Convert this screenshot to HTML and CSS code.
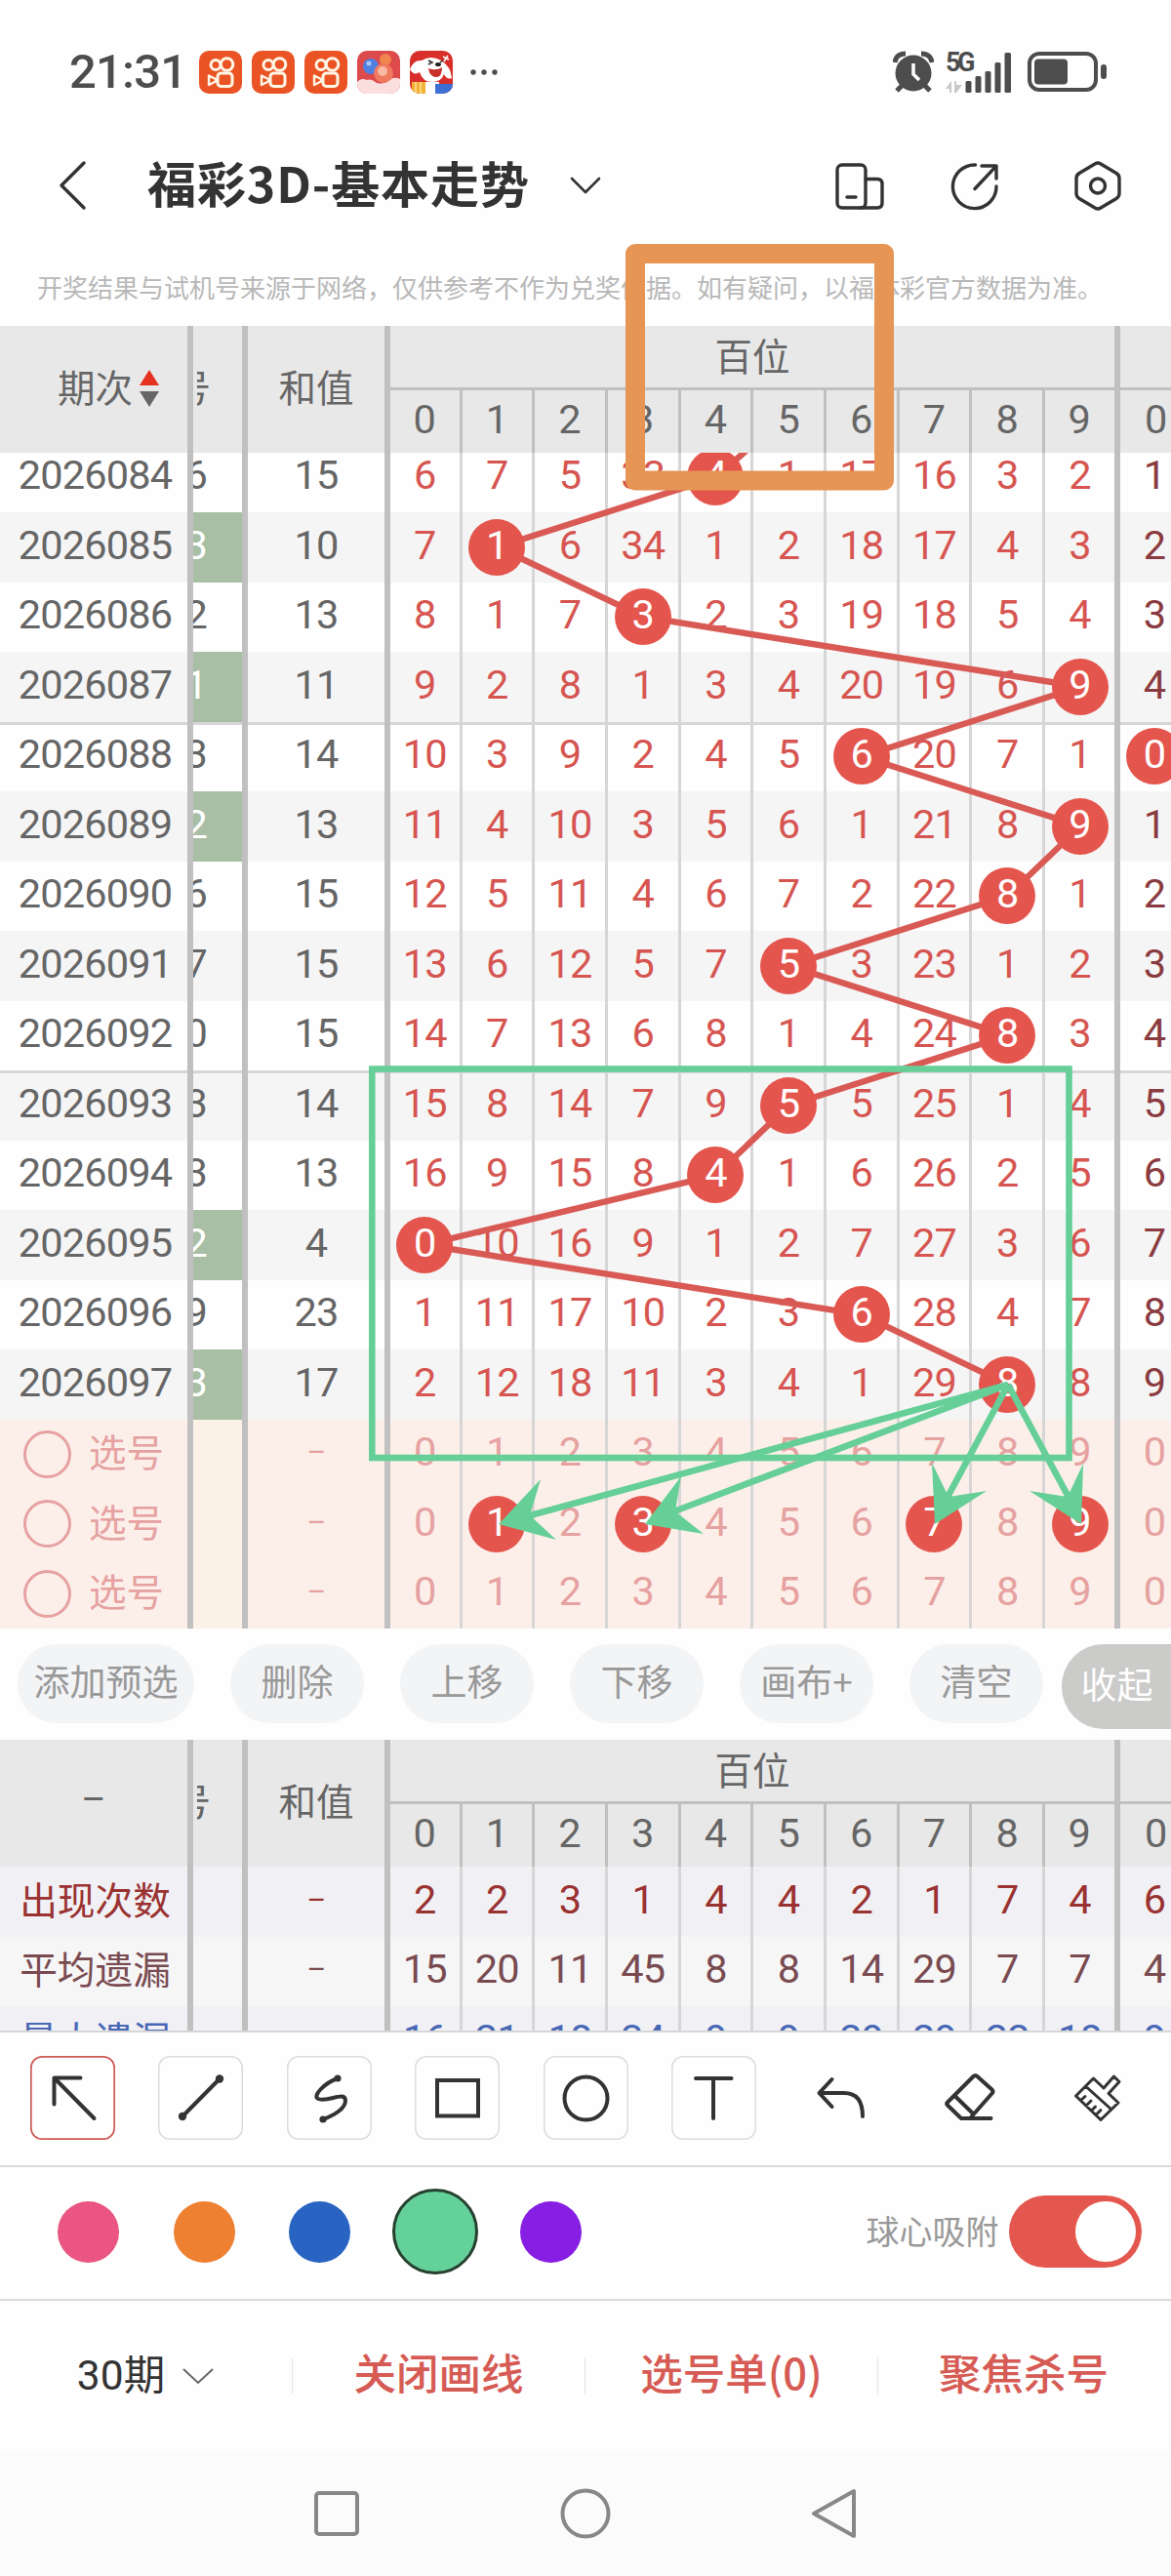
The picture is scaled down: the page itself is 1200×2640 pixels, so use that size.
FILE: index.html
```
<!DOCTYPE html>
<html lang="zh-CN">
<head>
    <meta charset="UTF-8">
    <meta name="viewport" content="width=device-width, initial-scale=1.0">
    <title>福彩3D-基本走势</title>
    <link rel="stylesheet" href="styles.css">
</head>
<body>
<div class="phone">
    <div class="status-bar">
        <span class="clock">21:31</span>
        <div class="app-icons">
            <svg class="app" viewBox="0 0 44 44"><use href="#kuai"/></svg>
            <svg class="app" viewBox="0 0 44 44"><use href="#kuai"/></svg>
            <svg class="app" viewBox="0 0 44 44"><use href="#kuai"/></svg>
            <svg class="app" viewBox="0 0 44 44">
                <rect width="44" height="44" fill="#dd4a4c"/>
                <path d="M0 32 Q4 27 10 30 Q15 28 20 33 Q28 35 33 30 Q38 26 44 29 V44 H0 Z" fill="#fbdfdf"/>
                <circle cx="29" cy="9" r="6" fill="#f0854f"/>
                <circle cx="14" cy="16" r="8" fill="#4f7fe0"/>
                <circle cx="12" cy="13" r="2.5" fill="#a9c4f7"/>
                <circle cx="27" cy="23" r="10" fill="#f07a5f"/>
                <circle cx="26" cy="21" r="5" fill="#f9b9a2"/>
            </svg>
            <svg class="app" viewBox="0 0 44 44">
                <rect width="44" height="44" fill="#d92f2b"/>
                <path d="M12 10 Q22 4 32 10 Q42 16 43 28 Q38 30 35 24 Q32 32 23 32 Q13 32 10 22 Q4 26 0 19 Q4 9 12 10 Z" fill="#fff"/>
                <path d="M19 18 Q27 21 33 17 Q33 28 26 27 Q20 26 19 18 Z" fill="#c9302c"/>
                <ellipse cx="29" cy="14" rx="3" ry="2" fill="#222"/>
                <path d="M19 10 l4 2 l-4 2 M34 10 l-3 2" fill="none" stroke="#222" stroke-width="1.4"/>
                <path d="M14 32 H30 V44 H14 Z" fill="#fff"/>
                <rect x="2" y="32" width="14" height="12" fill="#f2b233"/>
                <path d="M6 32 v12 M11 32 v12" stroke="#fbe0a0" stroke-width="1.5"/>
                <rect x="26" y="34" width="18" height="10" fill="#3d6fd6"/>
                <path d="M34 6 l6 3 M39 5 l-4 6" stroke="#fff" stroke-width="1.5"/>
            </svg>
        </div>
        <svg class="dots" viewBox="0 0 28 8"><circle cx="3" cy="4" r="2.7"/><circle cx="14" cy="4" r="2.7"/><circle cx="25" cy="4" r="2.7"/></svg>
        <svg class="alarm" viewBox="0 0 42 44">
            <circle cx="21" cy="23" r="18.5" fill="#4d4d4d"/>
            <path d="M2 12 Q3 3 13 3 M29 3 Q39 3 40 12" fill="none" stroke="#4d4d4d" stroke-width="5"/>
            <path d="M9 36 L4 41 M33 36 L38 41" stroke="#4d4d4d" stroke-width="5"/>
            <path d="M21 13 V24 L27 30" fill="none" stroke="#fff" stroke-width="3.5"/>
        </svg>
        <div class="signal">
            <span class="net">5G</span>
            <svg viewBox="0 0 68 42">
                <path d="M0 38 L6 30 V42 H4 V38 Z M9 30 H11 V34 L17 34 L11 42 H9 Z" fill="#c8c8c8"/>
                <g fill="#4d4d4d">
                    <rect x="20.5" y="30" width="6" height="12" rx="1.5"/>
                    <rect x="30.5" y="25" width="6" height="17" rx="1.5"/>
                    <rect x="40.5" y="20" width="6" height="22" rx="1.5"/>
                    <rect x="50.5" y="11" width="6" height="31" rx="1.5"/>
                    <rect x="60.5" y="1" width="6.5" height="41" rx="1.5"/>
                </g>
            </svg>
        </div>
        <svg class="battery" viewBox="0 0 82 42">
            <rect x="2" y="2" width="68" height="37" rx="10" fill="none" stroke="#4d4d4d" stroke-width="4"/>
            <rect x="7" y="7.5" width="34" height="26" rx="4" fill="#4d4d4d"/>
            <rect x="75" y="13" width="6" height="15" rx="3" fill="#4d4d4d"/>
        </svg>
    </div>

    <div class="title-bar">
        <svg class="back" viewBox="0 0 30 52"><path d="M27 3 L4 26 L27 49"/></svg>
        <h1>福彩3D-基本走势</h1>
        <svg class="chevron" viewBox="0 0 32 18"><path d="M2 2 L16 16 L30 2"/></svg>
        <svg class="action phone-icon" viewBox="0 0 52 52">
            <rect x="4" y="5" width="29" height="44" rx="5"/>
            <path d="M33 19.5 H45 Q50 19.5 50 24.5 V44 Q50 49 45 49 H28 M14 38 H23"/>
        </svg>
        <svg class="action share-icon" viewBox="0 0 52 52">
            <path d="M26.5 5 A22.3 22.3 0 1 0 48 27 M33 6 H48 V19 M48 6 L26 29.5"/>
        </svg>
        <svg class="action set-icon" viewBox="0 0 52 52">
            <path d="M23 4 Q26 2 29 4 L45 13.5 Q48 15.5 48 18.5 V34.5 Q48 37.5 45 39.5 L29 49 Q26 51 23 49 L7 39.5 Q4 37.5 4 34.5 V18.5 Q4 15.5 7 13.5 Z"/>
            <circle cx="26" cy="26.5" r="7.5"/>
        </svg>
    </div>

    <p class="notice">开奖结果与试机号来源于网络，仅供参考不作为兑奖依据。如有疑问，以福体彩官方数据为准。</p>

    <div class="chart-head" id="mainHead"></div>
    <div class="chart-body">
        <div class="rows" id="mainRows"></div>
        <svg class="trend" viewBox="0 0 1200 1205">
            <polyline id="trendLine"/>
        </svg>
    </div>

    <div class="edit-bar">
        <button class="pill wide">添加预选</button>
        <button class="pill">删除</button>
        <button class="pill">上移</button>
        <button class="pill">下移</button>
        <button class="pill">画布+</button>
        <button class="pill">清空</button>
        <button class="fold">收起</button>
    </div>

    <div class="chart-head" id="statHead"></div>
    <div class="stats" id="statRows"></div>

    <div class="tools">
        <svg class="tool active" viewBox="0 0 87 86"><path d="M51.5 22.5 H24.5 V49.5 M24.5 22.5 L65.5 64"/></svg>
        <svg class="tool" viewBox="0 0 87 86"><path d="M63 23.5 L25 62"/><circle class="dot" cx="63" cy="23.5" r="4.2"/><circle class="dot" cx="25" cy="62" r="4.2"/></svg>
        <svg class="tool" viewBox="0 0 87 86"><path d="M52 23 C38 28 26 41 32 44 C42 48 60 35 60 46 C60 54 48 61 37 65"/><circle class="dot" cx="52" cy="23" r="3.6"/><circle class="dot" cx="37" cy="65" r="3.6"/></svg>
        <svg class="tool" viewBox="0 0 87 86"><path class="sharp" d="M23 25 H65 V61.5 H23 Z"/></svg>
        <svg class="tool" viewBox="0 0 87 86"><circle cx="43.5" cy="43.5" r="22"/></svg>
        <svg class="tool" viewBox="0 0 87 86"><path d="M25 23 H61.5 M43 23 V64"/></svg>
        <svg class="tool plain" viewBox="0 0 87 86"><path d="M33.5 24 L20.5 38 L33.5 52 M20.5 38 H46 Q65 38 65 62"/></svg>
        <svg class="tool plain" viewBox="0 0 87 86"><path d="M46.5 21 Q48.5 19 50.5 21 L65.5 34.5 Q67.5 36.5 65.5 38.5 L43 64 H34 L20 50.5 Q18.5 49 20 47.5 Z M27.5 41 L46 59 M34 64 H64.5"/></svg>
        <svg class="tool plain thin" viewBox="0 0 87 86"><path d="M59.5 21 L65 26.5 L54 38.5 L64 48 L46 65.5 L20.5 41 L38.5 23 L49 33 Z M31 31.5 L56.5 54.5 M25.5 45.5 L30 41.5 M31 51 L36 46 M36.5 56 L40.5 52 M41 60.5 L46 55.5"/></svg>
    </div>

    <div class="colors">
        <span class="swatch pink"></span>
        <span class="swatch orange"></span>
        <span class="swatch blue"></span>
        <span class="swatch green selected"></span>
        <span class="swatch purple"></span>
        <span class="snap-label">球心吸附</span>
        <span class="switch"><i></i></span>
    </div>

    <div class="bottom-bar">
        <div class="item dark">30期<svg class="chevron small" viewBox="0 0 34 18"><path d="M2 2 L17 16 L32 2"/></svg></div>
        <div class="item">关闭画线</div>
        <div class="item">选号单(0)</div>
        <div class="item">聚焦杀号</div>
    </div>

    <div class="nav-bar">
        <svg viewBox="0 0 56 56"><rect x="7" y="7" width="42" height="42" rx="3"/></svg>
        <svg viewBox="0 0 56 56"><circle cx="28" cy="28" r="23.5"/></svg>
        <svg viewBox="0 0 56 56"><path d="M48 5 V51 L7 28 Z"/></svg>
    </div>

    <!-- user drawings on top of the chart -->
    <svg class="canvas" viewBox="0 0 1200 2640">
        <rect x="651" y="260" width="255" height="232.5" fill="none" stroke="#e69555" stroke-width="20" stroke-linejoin="round"/>
        <rect x="381.3" y="1095.5" width="714.2" height="398.5" fill="none" stroke="#66cf98" stroke-width="6.6"/>
        <g fill="none" stroke="#66cf98" stroke-width="6.6">
            <path d="M1033 1419 L540 1554"/>
            <path d="M1033 1419 L688 1550"/>
            <path d="M1033 1419 L969 1538"/>
            <path d="M1033 1419 L1097 1538"/>
        </g>
        <g fill="#66cf98">
            <path d="M511 1562 L554 1516 L543 1553 L570 1578 Z"/>
            <path d="M661 1562 L698 1513 L692 1549 L721 1572 Z"/>
            <path d="M958 1562 L955 1499 L972 1534 L1011 1528 Z"/>
            <path d="M1108 1562 L1110 1500 L1094 1534 L1055 1528 Z"/>
        </g>
    </svg>
</div>

<svg width="0" height="0" class="defs">
    <symbol id="kuai" viewBox="0 0 44 44">
        <rect width="44" height="44" fill="#ea5424"/>
        <g fill="none" stroke="#fff6e6" stroke-width="3">
            <circle cx="17" cy="14.5" r="5"/>
            <circle cx="28.5" cy="14" r="6.3"/>
            <rect x="19" y="23" width="15" height="13.5" rx="3.5"/>
            <path d="M10 25.5 L17 29 V31.5 L10 35 Z" stroke-width="2.4" stroke-linejoin="round"/>
        </g>
    </symbol>
</svg>
<script src="script.js"></script>
</body>
</html>
```
FILE: styles.css
```
* {
    box-sizing: border-box;
}
body {
    margin: 0;
    background-color: #fefefe;
    font-family: Roboto, "Noto Sans CJK SC", sans-serif;
    color: #666;
}
.phone {
    position: relative;
    width: 1200px;
    height: 2640px;
    overflow: hidden;
}
.defs {
    display: block;
}

/* Status bar */
.status-bar {
    display: flex;
    align-items: center;
    height: 147px;
    padding-left: 71px;
}
.clock {
    width: 133px;
    font-size: 49px;
    font-weight: 500;
    letter-spacing: -0.8px;
    color: #4d4d4d;
}
.app-icons {
    display: flex;
    gap: 10px;
}
.app {
    width: 44px;
    height: 44px;
    border-radius: 10px;
}
.dots {
    width: 28px;
    height: 8px;
    margin-left: 18px;
    fill: #4d4d4d;
}
.alarm {
    width: 42px;
    height: 44px;
    margin-left: 405px;
}
.signal {
    position: relative;
    width: 68px;
    height: 42px;
    margin-left: 12px;
}
.signal svg {
    display: block;
    width: 68px;
    height: 42px;
}
.net {
    position: absolute;
    left: 0;
    top: -2px;
    font-size: 27px;
    line-height: 26px;
    font-weight: 700;
    letter-spacing: -3.5px;
    color: #4d4d4d;
}
.battery {
    width: 82px;
    height: 42px;
    margin-left: 16px;
}

/* Title bar */
.title-bar {
    display: flex;
    align-items: center;
    height: 86px;
    padding-left: 59px;
}
.title-bar svg {
    flex: none;
    fill: none;
    stroke: #333;
    stroke-width: 3.4;
    stroke-linecap: round;
    stroke-linejoin: round;
}
.back {
    width: 30px;
    height: 52px;
}
.title-bar h1 {
    width: 394px;
    margin: -9px 0 0 62px;
    font-family: "Noto Sans CJK SC", sans-serif;
    font-size: 50px;
    font-weight: 700;
    letter-spacing: 0.9px;
    white-space: nowrap;
    color: #333;
}
.title-bar .chevron {
    width: 32px;
    height: 18px;
    margin-left: 39px;
    stroke-width: 2.6;
}
.action {
    width: 52px;
    height: 52px;
}
.phone-icon {
    margin-left: 238px;
}
.share-icon {
    margin-left: 67px;
}
.set-icon {
    margin-left: 74px;
}

.notice {
    height: 101px;
    margin: 0;
    padding: 43px 0 0 38px;
    font-size: 26px;
    line-height: 40px;
    white-space: nowrap;
    color: #b8b8b8;
}

/* Chart */
.chart-head {
    display: grid;
    grid-template-columns: 198px 56px 146px 748px 73px;
    height: 130px;
    font-size: 38.5px;
    background-color: #e8e8e8;
}
.head-cell {
    display: flex;
    align-items: center;
    justify-content: center;
    padding-bottom: 9px;
    border-right: 6px solid #c0c0c0;
    overflow: hidden;
}
.head-cell.period {
    justify-content: flex-start;
    padding-left: 59px;
}
.head-cell.cut {
    justify-content: flex-end;
    margin-left: 4px;
    padding-right: 32px;
}
.sort {
    display: flex;
    flex-direction: column;
    gap: 6px;
    margin: 7px 0 0 7px;
}
.sort i {
    border-left: 10px solid transparent;
    border-right: 10px solid transparent;
}
.sort .up {
    border-bottom: 16px solid #e5321f;
}
.sort .down {
    border-top: 16px solid #666;
}
.group {
    display: grid;
    grid-template-rows: 66px 64px;
    border-right: 6.5px solid #c0c0c0;
}
.group-name {
    display: flex;
    align-items: center;
    justify-content: center;
    padding-bottom: 6px;
    border-bottom: 3px solid #c0c0c0;
}
.group-nums {
    display: grid;
    grid-template-columns: 73.5px repeat(8, 74.7px) 70.5px;
}
.group-nums span {
    display: flex;
    align-items: center;
    justify-content: center;
    padding-bottom: 6px;
    font-size: 41.5px;
    border-right: 3px solid #c0c0c0;
}
.group-nums span:last-child {
    border-right: none;
}

.chart-body {
    position: relative;
    height: 1205px;
    overflow: hidden;
}
.rows {
    margin-top: -10.5px;
}
.row {
    display: grid;
    grid-template-columns: 198px 56px 146px 73.5px repeat(8, 74.7px) 77px 73px;
    height: 71.5px;
    font-size: 41.5px;
    letter-spacing: -0.8px;
    background-color: #fefefe;
}
.row.alt {
    background-color: #f5f5f5;
}
.cell {
    display: flex;
    align-items: center;
    justify-content: center;
    min-width: 0;
    padding-bottom: 5px;
    border-right: 3px solid #d6d6d6;
    white-space: nowrap;
}
.cell.wide {
    border-right: 6px solid #c0c0c0;
}
.cell:first-child {
    padding-left: 3px;
}
.split .cell {
    box-shadow: inset 0 3px #d6d6d6;
}
.cell.cut {
    justify-content: flex-end;
    padding-right: 36px;
    overflow: hidden;
}
.cell.green {
    color: #fff;
    background-color: #a8bfa5;
}
.cell.hundred {
    color: #d65551;
}
.cell.ten {
    color: #8a3b40;
}
.cell.dash {
    font-size: 30px;
}
.cell.hit {
    padding-bottom: 0;
}
.ball {
    position: relative;
    z-index: 2;
    flex: none;
    width: 58px;
    height: 58px;
    margin: 0 -10px;
    padding-bottom: 5px;
    line-height: 53px;
    text-align: center;
    border-radius: 50%;
    color: #fff;
    background-color: #e4554d;
}
.row.pick {
    background-color: #fcefe9;
}
.row.pick .cell {
    color: #e6a1a1;
}
.row.pick .cut {
    background-color: #fcf1e6;
}
.cell.pick-name {
    padding: 0 0 8px;
    font-size: 38.5px;
    letter-spacing: 0;
}
.pick-name i {
    width: 49px;
    height: 49px;
    margin: 8px 18px 0 0;
    border: 3px solid #e6a1a1;
    border-radius: 50%;
}
.row.pick .ball {
    color: #fff;
}
.trend {
    position: absolute;
    left: 0;
    top: 0;
    width: 1200px;
    height: 1205px;
    z-index: 1;
}
.trend polyline {
    fill: none;
    stroke: #d95a55;
    stroke-width: 6.4;
}

/* Edit buttons */
.edit-bar {
    display: flex;
    gap: 37px;
    height: 114px;
    padding: 16px 0 0 18px;
}
.edit-bar button {
    flex: none;
    width: 137px;
    height: 81px;
    padding: 0 0 7px;
    border: none;
    border-radius: 41px;
    font-family: "Noto Sans CJK SC", sans-serif;
    font-size: 37px;
    color: #999;
    background-color: #f3f4f6;
}
.edit-bar .wide {
    width: 181px;
}
.edit-bar .fold {
    width: 113px;
    height: 87px;
    margin-left: -18px;
    border-radius: 43px 0 0 43px;
    color: #fff;
    background-color: #cbcbca;
}

/* Statistics */
.stats {
    height: 168px;
    overflow: hidden;
}
.stats .row {
    background-color: #f1f1f5;
}
.stats .row.alt {
    background-color: #f6f6f7;
}
.stats .cell:first-child {
    padding-bottom: 8px;
    font-size: 38.7px;
    letter-spacing: 0;
}
.stats .times .cell {
    color: #9a3231;
}
.stats .avg .cell {
    color: #794b50;
}
.stats .max .cell {
    color: #4867b5;
}

/* Drawing tools */
.tools {
    display: flex;
    gap: 44.4px;
    height: 138px;
    padding: 24px 0 0 31px;
    border-top: 2px solid #d6d6d6;
}
.tool {
    flex: none;
    width: 87px;
    height: 86px;
    border-radius: 12px;
    box-shadow: inset 0 0 0 1.5px #dcdce0;
    fill: none;
    stroke: #333;
    stroke-width: 4;
    stroke-linecap: round;
    stroke-linejoin: round;
}
.tool.active {
    box-shadow: inset 0 0 0 1.7px #cf5a56;
}
.tool.plain {
    box-shadow: none;
}
.tool.thin {
    stroke-width: 3;
}
.tool .dot {
    fill: #333;
    stroke: none;
}
.tool .sharp {
    stroke-linejoin: miter;
}

.colors {
    display: flex;
    align-items: center;
    height: 137px;
    padding: 0 0 3px 59px;
    border-top: 2px solid #dadada;
}
.swatch {
    width: 63px;
    height: 63px;
    margin-right: 55.5px;
    border-radius: 50%;
}
.pink { background-color: #ea5583; }
.orange { background-color: #ee8032; }
.blue { background-color: #2a64c3; }
.green { background-color: #64d09a; }
.purple { background-color: #871fe3; }
.swatch.selected {
    width: 88px;
    height: 88px;
    margin: 0 43px 0 -12.5px;
    border: 3px solid #26402f;
}
.snap-label {
    margin: -4px 10px 0 236px;
    font-size: 34px;
    color: #999;
}
.switch {
    display: flex;
    justify-content: flex-end;
    align-items: center;
    width: 136px;
    height: 74px;
    padding-right: 6px;
    border-radius: 37px;
    background-color: #e4574f;
}
.switch i {
    width: 62px;
    height: 62px;
    border-radius: 50%;
    background-color: #fff;
}

.bottom-bar {
    display: flex;
    align-items: center;
    height: 156px;
    border-top: 2px solid #dadada;
}
.item {
    display: flex;
    align-items: center;
    justify-content: center;
    width: 300px;
    height: 38px;
    padding-bottom: 9px;
    font-family: "Noto Sans CJK SC", sans-serif;
    font-size: 43.5px;
    font-weight: 500;
    color: #d65b54;
    border-right: 1px solid #e2e2e2;
}
.item:last-child {
    padding-right: 2px;
    border-right: none;
}
.item.dark {
    font-family: Roboto, "Noto Sans CJK SC", sans-serif;
    font-size: 42.5px;
    font-weight: 400;
    color: #333;
}
.chevron.small {
    width: 34px;
    height: 18px;
    margin: 9px 0 0 17px;
    fill: none;
    stroke: #666;
    stroke-width: 2;
}

.nav-bar {
    display: flex;
    justify-content: center;
    gap: 199px;
    height: 128px;
    padding-top: 36px;
    background-color: #fbfbfb;
}
.nav-bar svg {
    width: 56px;
    height: 56px;
    fill: none;
    stroke: #888;
    stroke-width: 4;
    stroke-linejoin: round;
}

.canvas {
    position: absolute;
    left: 0;
    top: 0;
    width: 1200px;
    height: 2640px;
    z-index: 3;
}
```
FILE: script.js
```
// [period, last digit of the test number, highlighted, sum, hundreds 0-9, tens 0, hit column]
const draws = [
    ["2026084", 6, 0, 15, [6, 7, 5, 33, 4, 1, 17, 16, 3, 2], 1, 4],
    ["2026085", 3, 1, 10, [7, 1, 6, 34, 1, 2, 18, 17, 4, 3], 2, 1],
    ["2026086", 2, 0, 13, [8, 1, 7, 3, 2, 3, 19, 18, 5, 4], 3, 3],
    ["2026087", 1, 1, 11, [9, 2, 8, 1, 3, 4, 20, 19, 6, 9], 4, 9],
    ["2026088", 3, 0, 14, [10, 3, 9, 2, 4, 5, 6, 20, 7, 1], 0, 6],
    ["2026089", 2, 1, 13, [11, 4, 10, 3, 5, 6, 1, 21, 8, 9], 1, 9],
    ["2026090", 6, 0, 15, [12, 5, 11, 4, 6, 7, 2, 22, 8, 1], 2, 8],
    ["2026091", 7, 0, 15, [13, 6, 12, 5, 7, 5, 3, 23, 1, 2], 3, 5],
    ["2026092", 0, 0, 15, [14, 7, 13, 6, 8, 1, 4, 24, 8, 3], 4, 8],
    ["2026093", 3, 0, 14, [15, 8, 14, 7, 9, 5, 5, 25, 1, 4], 5, 5],
    ["2026094", 3, 0, 13, [16, 9, 15, 8, 4, 1, 6, 26, 2, 5], 6, 4],
    ["2026095", 2, 1, 4, [0, 10, 16, 9, 1, 2, 7, 27, 3, 6], 7, 0],
    ["2026096", 9, 0, 23, [1, 11, 17, 10, 2, 3, 6, 28, 4, 7], 8, 6],
    ["2026097", 3, 1, 17, [2, 12, 18, 11, 3, 4, 1, 29, 8, 8], 9, 8]
];

const picks = [[], [1, 3, 7, 9], []];

const stats = [
    ["times", "出现次数", [2, 2, 3, 1, 4, 4, 2, 1, 7, 4], 6],
    ["avg alt", "平均遗漏", [15, 20, 11, 45, 8, 8, 14, 29, 7, 7], 4],
    ["max", "最大遗漏", [16, 21, 18, 34, 9, 9, 29, 29, 22, 18], 9]
];

const digits = [0, 1, 2, 3, 4, 5, 6, 7, 8, 9];

function headHtml(first) {
    return `
        ${first}
        <div class="head-cell cut">号</div>
        <div class="head-cell">和值</div>
        <div class="group">
            <div class="group-name">百位</div>
            <div class="group-nums">${digits.map(d => `<span>${d}</span>`).join('')}</div>
        </div>
        <div class="group">
            <div class="group-name"></div>
            <div class="group-nums"><span>0</span></div>
        </div>`;
}

function numCells(nums, hits) {
    return nums.map((n, i) => {
        const wide = i === 9 ? ' wide' : '';
        if (hits.includes(i)) {
            return `<div class="cell hundred hit${wide}"><span class="ball">${n}</span></div>`;
        }
        return `<div class="cell hundred${wide}">${n}</div>`;
    }).join('');
}

document.getElementById('mainHead').innerHTML =
    headHtml('<div class="head-cell period">期次<span class="sort"><i class="up"></i><i class="down"></i></span></div>');
document.getElementById('statHead').innerHTML = headHtml('<div class="head-cell">–</div>');

let html = '';
draws.forEach(([period, test, green, sum, nums, ten, hit], i) => {
    const cls = (i % 2 ? ' alt' : '') + (i === 4 || i === 9 ? ' split' : '');
    const tenCell = i === 4
        ? '<div class="cell ten hit"><span class="ball">0</span></div>'
        : `<div class="cell ten">${ten}</div>`;
    html += `<div class="row${cls}">
        <div class="cell wide">${period}</div>
        <div class="cell wide cut${green ? ' green' : ''}">${test}</div>
        <div class="cell wide">${sum}</div>
        ${numCells(nums, [hit])}${tenCell}
    </div>`;
});
picks.forEach(hits => {
    html += `<div class="row pick">
        <div class="cell wide pick-name"><i></i>选号</div>
        <div class="cell wide cut"></div>
        <div class="cell wide dash">–</div>
        ${numCells(digits, hits)}<div class="cell">0</div>
    </div>`;
});
document.getElementById('mainRows').innerHTML = html;

document.getElementById('statRows').innerHTML = stats.map(([cls, name, nums, ten]) => `
    <div class="row ${cls}">
        <div class="cell wide">${name}</div>
        <div class="cell wide cut"></div>
        <div class="cell wide dash">${cls === 'max' ? '' : '–'}</div>
        ${numCells(nums, [])}<div class="cell">${ten}</div>
    </div>`).join('');

// Line through the winning numbers, starting from the row hidden above
const points = draws.map((d, i) => `${435 + 74.7 * d[6]},${25.25 + 71.5 * i}`);
points.unshift('770,-7');
document.getElementById('trendLine').setAttribute('points', points.join(' '));
```
